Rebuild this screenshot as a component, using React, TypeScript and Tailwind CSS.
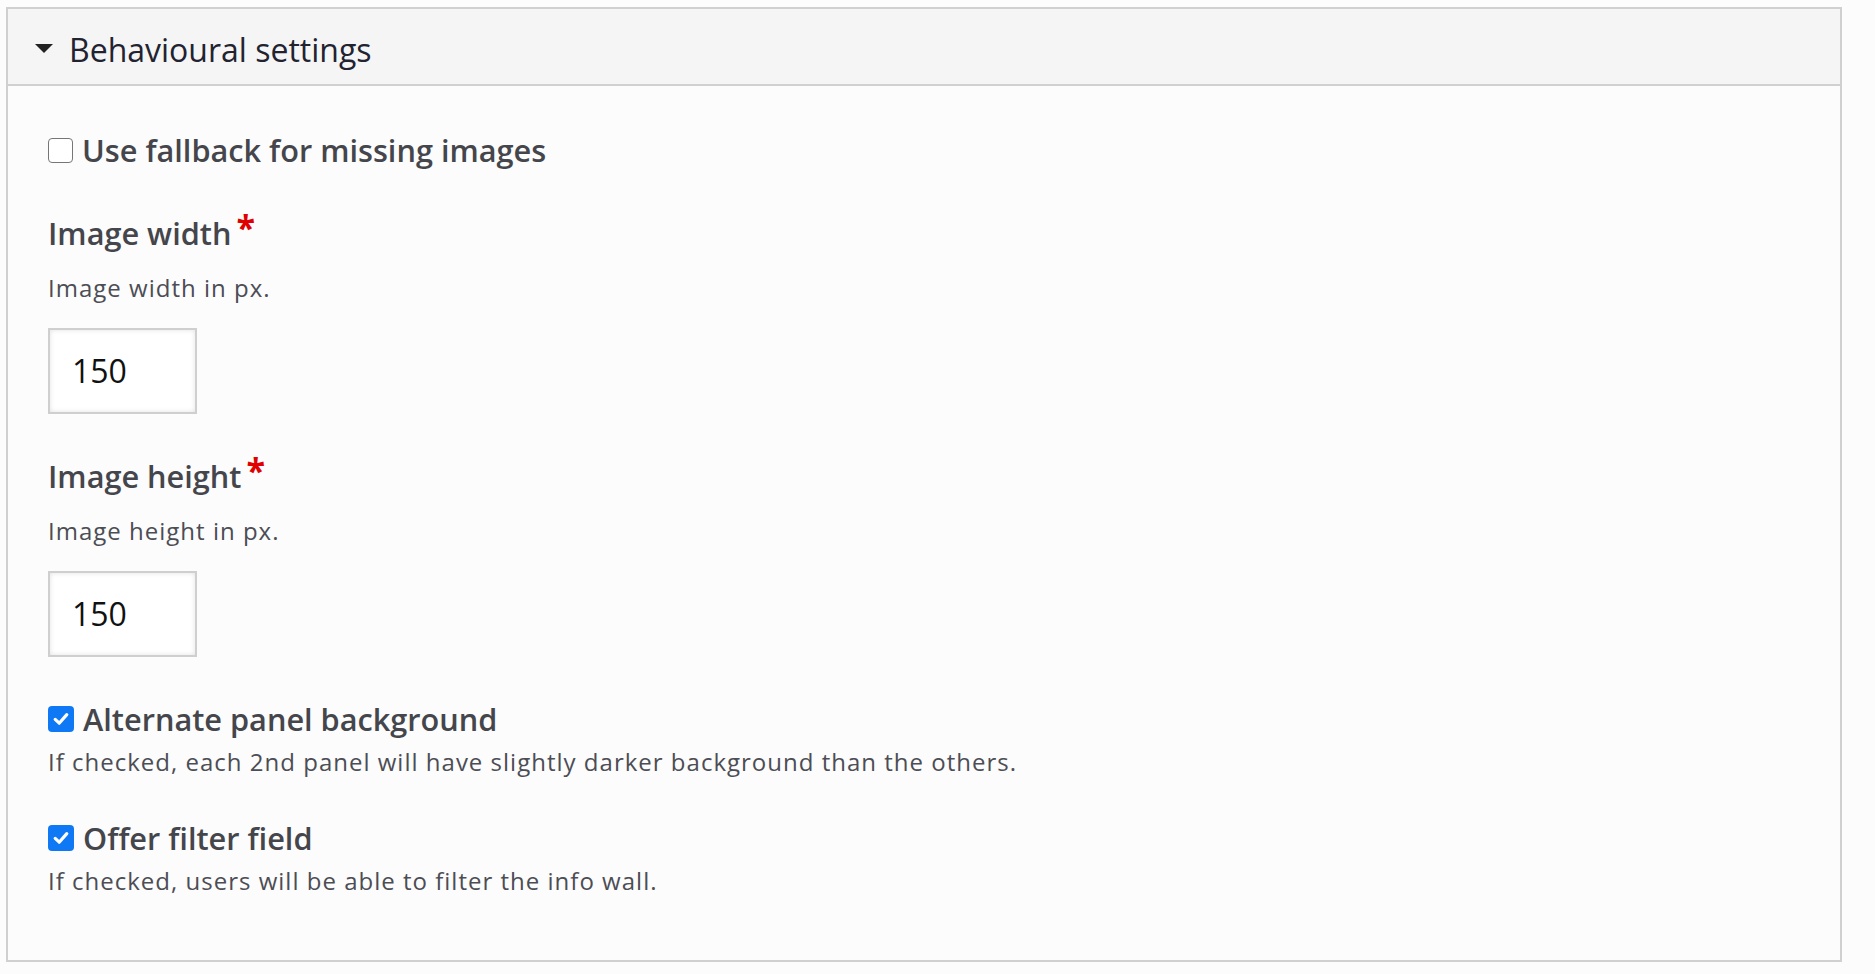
import React from "react";

const font = { fontFamily: '"Open Sans", "Noto Sans", sans-serif' };

function Check({ checked }: { checked?: boolean }) {
  if (!checked)
    return <span className="inline-block w-[25px] h-[25px] shrink-0 rounded-[4px] border-[1.5px] border-[#767676] bg-white" />;
  return (
    <span className="inline-flex items-center justify-center w-[26px] h-[26px] shrink-0 rounded-[4px] bg-[#0f78f5]">
      <svg width="18" height="18" viewBox="0 0 18 18">
        <path d="M3.2 9.4 L7.2 13.2 L14.8 4.6" fill="none" stroke="#fff" strokeWidth="3.2" strokeLinecap="round" strokeLinejoin="round" />
      </svg>
    </span>
  );
}

function CheckRow({ label, desc, checked }: { label: string; desc?: string; checked?: boolean }) {
  return (
    <div>
      <label className="flex items-center gap-[9px]">
        <Check checked={checked} />
        <span className="text-[30.7px] leading-[40px] font-semibold text-[#45464c]">{label}</span>
      </label>
      {desc && <p className="mt-[7px] text-[24px] leading-[32px] tracking-[0.042em] text-[#4c4d55]">{desc}</p>}
    </div>
  );
}

function NumberField({ label, desc }: { label: string; desc: string }) {
  return (
    <div>
      <div className="text-[30.7px] leading-[40px] font-semibold text-[#45464c]">
        {label}
        <span className="inline-block align-top ml-[5px] -mt-[6px] text-[34px] leading-[40px] font-bold text-[#e00000]">*</span>
      </div>
      <p className="mt-[19px] text-[24px] leading-[32px] tracking-[0.042em] text-[#4c4d55]">{desc}</p>
      <div className="mt-[24px] w-[149px] h-[86px] border-2 border-[#cfcfcf] bg-white shadow-[inset_0_0_5px_rgba(0,0,0,0.12)] flex items-center pl-[22px]">
        <span className="text-[32px] text-[#111]">150</span>
      </div>
    </div>
  );
}

export default function App() {
  return (
    <div className="min-h-screen bg-[#fcfcfc] pt-[7px] pl-[6px]" style={font}>
      <div className="w-[1836px] border-2 border-[#d0d0d0] bg-[#fcfcfc]">
        <div className="h-[77px] bg-[#f5f5f5] border-b-2 border-[#d0d0d0] flex items-center pl-[27px] pt-[6px] gap-[16px]">
          <svg width="18" height="9" viewBox="0 0 18 9" className="-mt-[2px]">
            <polygon points="0,0 18,0 9,9" fill="#222" />
          </svg>
          <span className="text-[32px] leading-[40px] text-[#222330]">Behavioural settings</span>
        </div>
        <div className="pl-[40px] pt-[44px] pb-[63px]">
          <CheckRow label="Use fallback for missing images" />
          <div className="mt-[43px]">
            <NumberField label="Image width" desc="Image width in px." />
          </div>
          <div className="mt-[42px]">
            <NumberField label="Image height" desc="Image height in px." />
          </div>
          <div className="mt-[42px]">
            <CheckRow checked label="Alternate panel background" desc="If checked, each 2nd panel will have slightly darker background than the others." />
          </div>
          <div className="mt-[40px]">
            <CheckRow checked label="Offer filter field" desc="If checked, users will be able to filter the info wall." />
          </div>
        </div>
      </div>
    </div>
  );
}
